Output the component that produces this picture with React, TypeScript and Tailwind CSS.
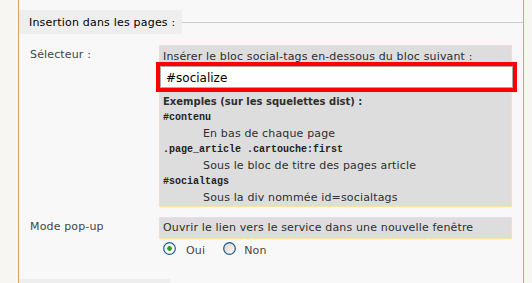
import * as React from "react";

function Radio({ checked }: { checked?: boolean }) {
  const id = checked ? "radio-on" : "radio-off";
  return (
    <svg width="13" height="13" viewBox="0 0 13 13" className="shrink-0">
      <defs>
        <linearGradient id={id} x1="0" y1="0" x2="1" y2="1">
          <stop offset="0" stopColor={checked ? "#ffffff" : "#d4d1c6"} />
          <stop offset="1" stopColor="#ffffff" />
        </linearGradient>
      </defs>
      <circle cx="6.5" cy="6.5" r="5.8" fill={`url(#${id})`} stroke="#1e5a8c" strokeWidth="1.2" />
      {checked && <circle cx="6.5" cy="6.5" r="2.4" fill="#21a121" />}
    </svg>
  );
}

function Row({
  label,
  children,
  className,
}: {
  label: string;
  children: React.ReactNode;
  className?: string;
}) {
  return (
    <div className={"flex " + (className ?? "")}>
      <div className="w-[140px] shrink-0 pl-[11px] pt-[2px] text-[11px] leading-[16px] tracking-[0.15px] text-[#444]">
        {label}
      </div>
      <div className="w-[353px]">{children}</div>
    </div>
  );
}

const examples = [
  { code: "#contenu", desc: "En bas de chaque page" },
  { code: ".page_article .cartouche:first", desc: "Sous le bloc de titre des pages article" },
  { code: "#socialtags", desc: "Sous la div nommée id=socialtags" },
];

export default function App() {
  return (
    <div
      className="flex h-[283px] w-[532px] overflow-hidden bg-[#f7f6f2]"
      style={{ fontFamily: '"DejaVu Sans", Verdana, sans-serif' }}
    >
      <div className="w-[18px] shrink-0" />
      <div className="flex w-[506px] shrink-0 flex-col border-x border-[#d9a75a] bg-[#f8f8f8] pt-[10px]">
        <div className="flex items-center">
          <div className="h-[24px] w-[163px] shrink-0 bg-[#eeeeee] pl-[10px] pt-[1px] text-[11px] leading-[24px] tracking-[0.2px] text-black">
            Insertion dans les pages :
          </div>
          <div className="h-px flex-1 bg-[#cccccc]" />
        </div>

        <Row label="Sélecteur :" className="mt-[11px]">
          <div className="border border-[#fbe0a8] bg-[#dddddd] pl-[3px] pt-[3px] text-[11px] leading-[16px] tracking-[0.15px] text-[#2e2e2e]">
            <div>Insérer le bloc social-tags en-dessous du bloc suivant :</div>
            <div className="-mt-[3px] -ml-[7px] -mr-[6px] border-4 border-[#ff0000]">
              <input
                readOnly
                value="#socialize"
                className="block h-[22px] w-full border border-[#aaaaaa] bg-white px-[5px] pt-[2px] text-[12px] tracking-normal text-black outline-none"
                style={{ fontFamily: '"DejaVu Sans", Verdana, sans-serif' }}
              />
            </div>
            <div className="mt-[2px] text-[10px] font-bold tracking-normal">Exemples (sur les squelettes dist) :</div>
            {examples.map((e) => (
              <React.Fragment key={e.code}>
                <div
                  className="text-[10px] font-bold tracking-normal text-[#222]"
                  style={{ fontFamily: '"Liberation Mono", "Courier New", monospace' }}
                >
                  {e.code}
                </div>
                <div className="pl-[40px]">{e.desc}</div>
              </React.Fragment>
            ))}
          </div>
        </Row>

        <Row label="Mode pop-up" className="mt-[10px]">
          <div className="border border-[#fbe0a8] bg-[#dddddd] pl-[3px] text-[11px] leading-[20px] tracking-[0.15px] text-[#2e2e2e]">
            Ouvrir le lien vers le service dans une nouvelle fenêtre
          </div>
          <div className="mt-[3px] flex items-start pl-[4px] text-[11px] leading-[13px] tracking-[0.15px] text-[#444]">
            <Radio checked />
            <span className="ml-[10px] mt-[2px]">Oui</span>
            <span className="ml-[18px]">
              <Radio />
            </span>
            <span className="ml-[8px] mt-[2px]">Non</span>
          </div>
        </Row>

        <div className="mt-[22px] h-[10px] w-[151px] bg-[#eeeeee]" />
      </div>
      <div className="flex-1" />
    </div>
  );
}
